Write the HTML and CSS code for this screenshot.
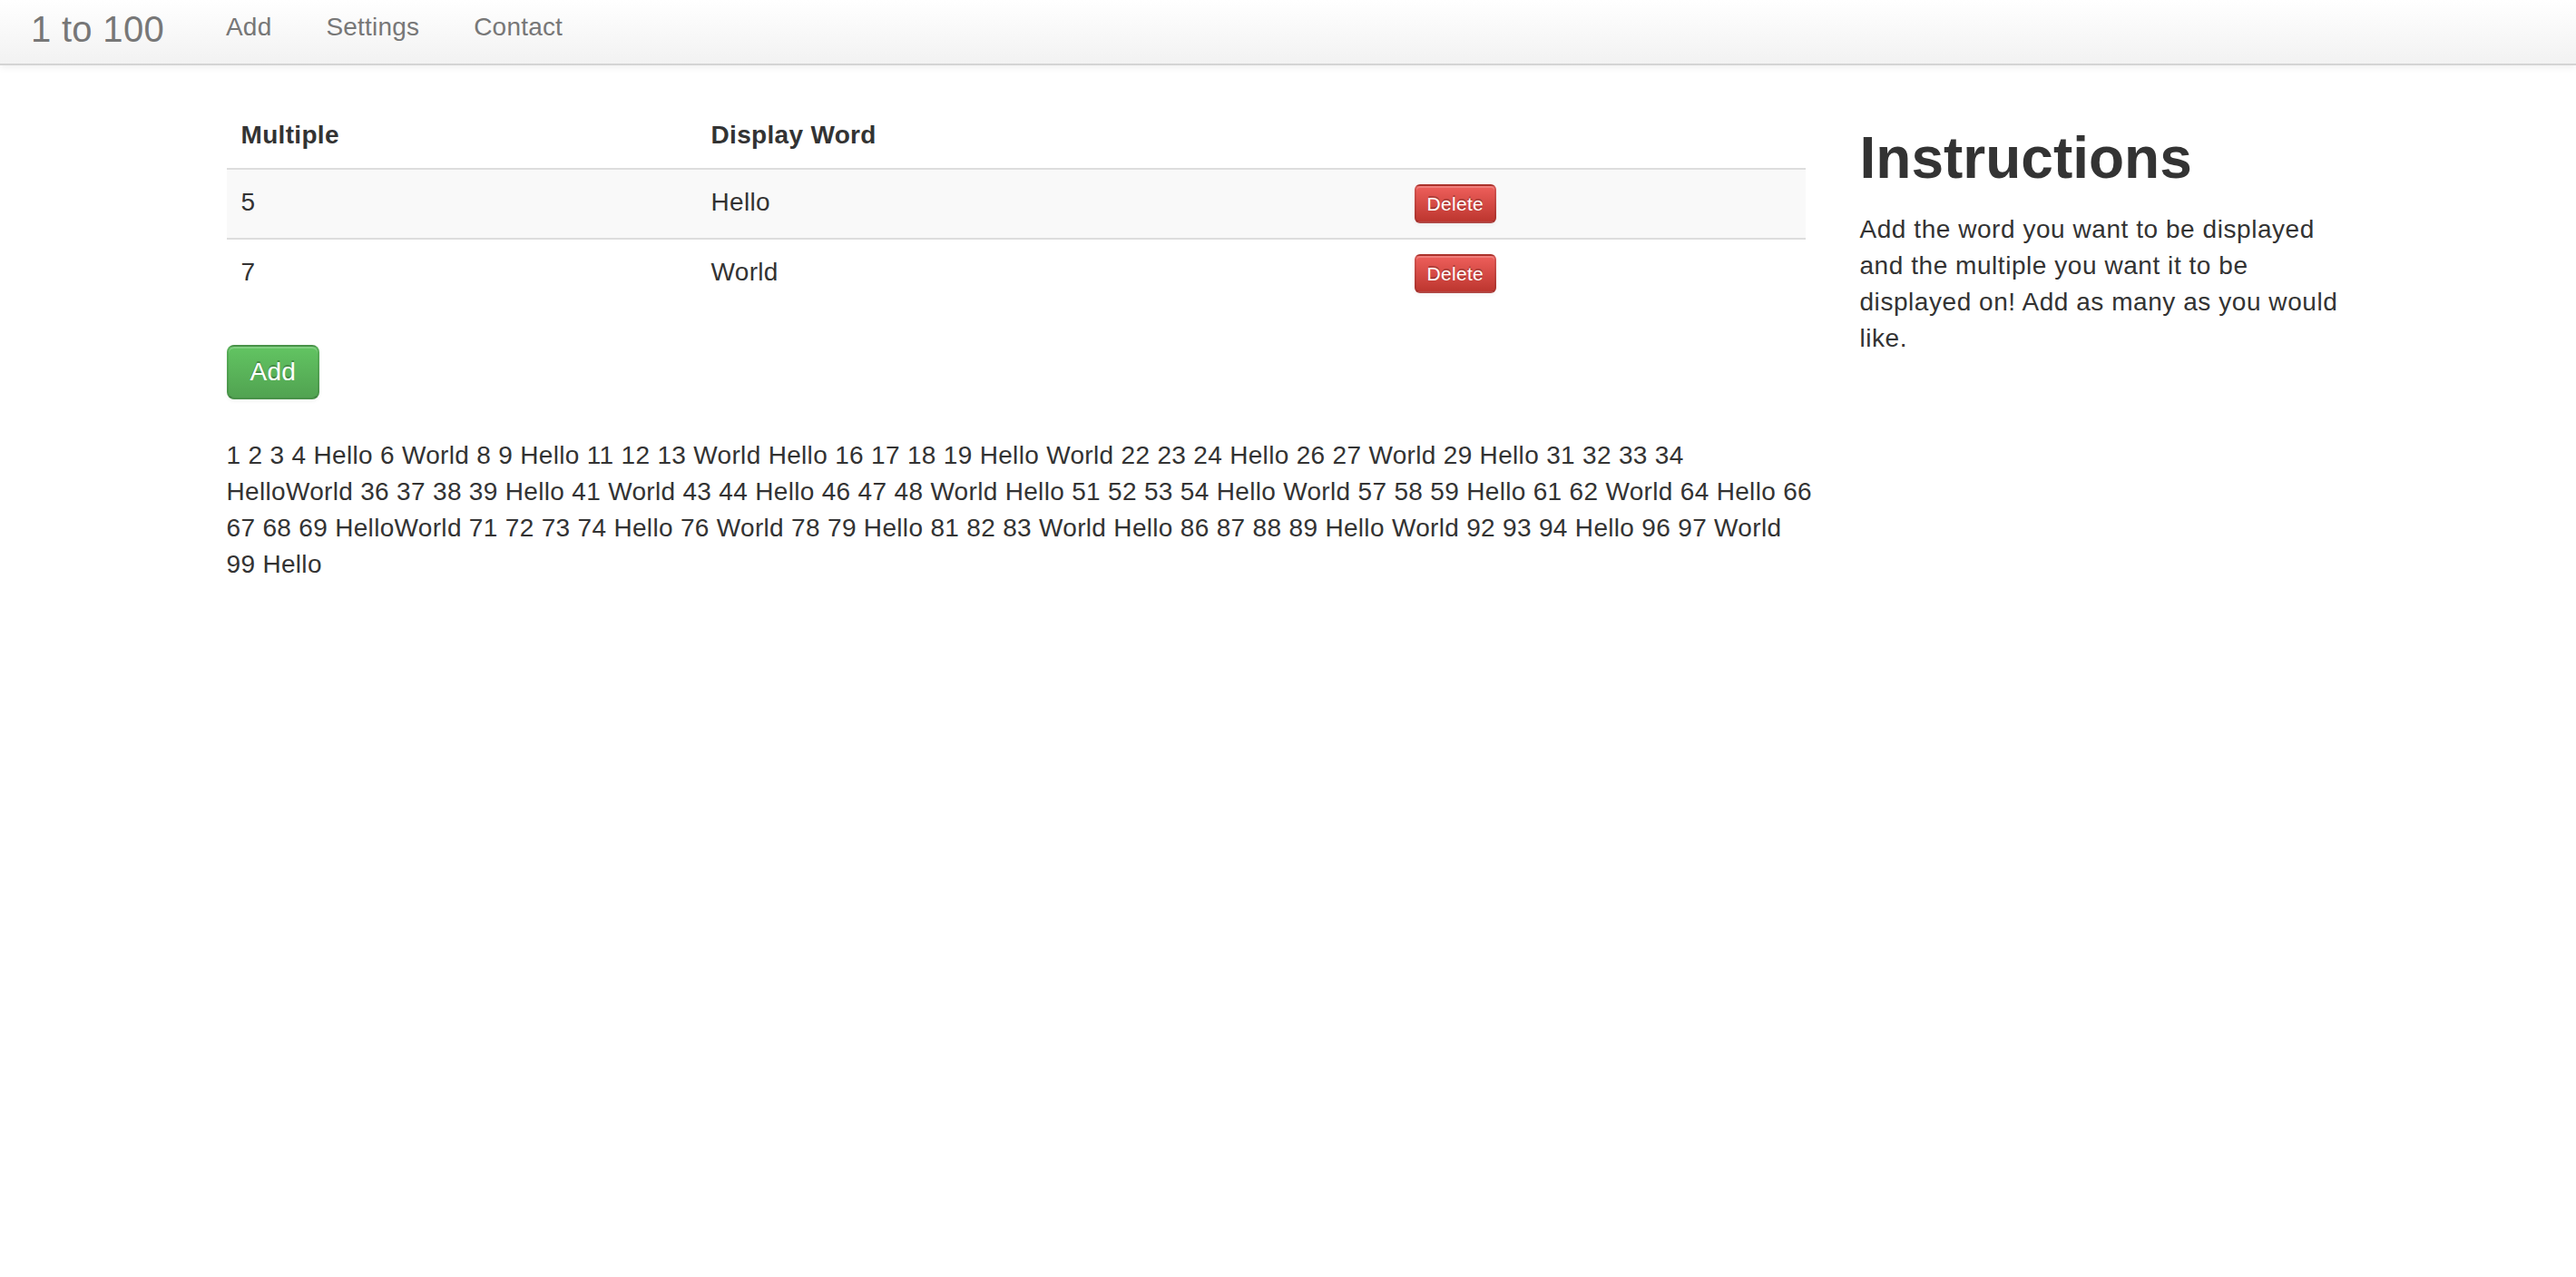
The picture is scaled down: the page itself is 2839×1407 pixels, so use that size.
FILE: index.html
```html
<!DOCTYPE html>
<html lang="en">
<head>
<meta charset="utf-8">
<title>1 to 100</title>
<link rel="stylesheet" href="styles.css">
</head>
<body>
<header class="navbar">
  <div class="navbar-inner">
    <a class="brand" href="#">1 to 100</a>
    <ul class="nav">
      <li><a href="#">Add</a></li>
      <li><a href="#">Settings</a></li>
      <li><a href="#">Contact</a></li>
    </ul>
  </div>
</header>
<div class="container">
  <div class="row">
    <div class="main">
      <table class="table">
        <thead>
          <tr>
            <th class="col-multiple">Multiple</th>
            <th class="col-word">Display Word</th>
            <th class="col-action"></th>
          </tr>
        </thead>
        <tbody>
          <tr class="odd">
            <td>5</td>
            <td>Hello</td>
            <td><button class="btn btn-mini btn-danger" type="button">Delete</button></td>
          </tr>
          <tr>
            <td>7</td>
            <td>World</td>
            <td><button class="btn btn-mini btn-danger" type="button">Delete</button></td>
          </tr>
        </tbody>
      </table>
      <div class="actions">
        <button class="btn btn-success" type="button">Add</button>
      </div>
      <p class="results">1 2 3 4 Hello 6 World 8 9 Hello 11 12 13 World Hello 16 17 18 19 Hello World 22 23 24 Hello 26 27 World 29 Hello 31 32 33 34<br>HelloWorld 36 37 38 39 Hello 41 World 43 44 Hello 46 47 48 World Hello 51 52 53 54 Hello World 57 58 59 Hello 61 62 World 64 Hello 66<br>67 68 69 HelloWorld 71 72 73 74 Hello 76 World 78 79 Hello 81 82 83 World Hello 86 87 88 89 Hello World 92 93 94 Hello 96 97 World<br>99 Hello</p>
    </div>
    <aside class="side">
      <h1 class="side-title">Instructions</h1>
      <p class="side-text">Add the word you want to be displayed and the multiple you want it to be displayed on! Add as many as you would like.</p>
    </aside>
  </div>
</div>
</body>
</html>
```
FILE: styles.css
```css
html, body {
  margin: 0;
  padding: 0;
}
body {
  font-family: "Liberation Sans", Arial, Helvetica, sans-serif;
  font-size: 28px;
  line-height: 40px;
  letter-spacing: 0.32px;
  color: #333333;
  background: #ffffff;
}
a {
  text-decoration: none;
}

/* navbar */
.navbar-inner {
  display: flex;
  align-items: flex-start;
  height: 70px;
  background-image: linear-gradient(to bottom, #ffffff, #f2f2f2);
  border-bottom: 2px solid #d4d4d4;
  box-shadow: 0 2px 8px rgba(0, 0, 0, 0.065);
}
.brand {
  display: block;
  padding: 0 38px 0 34px;
  font-size: 40px;
  line-height: 64px;
  letter-spacing: 0.3px;
  color: #777777;
}
.nav {
  display: flex;
  margin: 0;
  padding: 0;
  list-style: none;
}
.nav a {
  display: block;
  padding: 0 30px;
  font-size: 28px;
  line-height: 60px;
  letter-spacing: 0.2px;
  color: #777777;
}

/* layout */
.container {
  width: 2340px;
  margin: 0 auto;
  padding-top: 41px;
}
.row {
  display: flex;
  gap: 60px;
}
.main {
  width: 1740px;
  flex: none;
}
.side {
  width: 540px;
  flex: none;
}

/* table */
.table {
  width: 100%;
  border-collapse: collapse;
  border-spacing: 0;
  margin-bottom: 41px;
}
.table th,
.table td {
  padding: 16px;
  text-align: left;
  vertical-align: top;
  line-height: 40px;
}
.table th {
  font-weight: bold;
}
.table td {
  border-top: 2px solid #dddddd;
}
.table .odd td {
  background: #f9f9f9;
}
.col-multiple {
  width: 486px;
}
.col-word {
  width: 743px;
}

/* buttons */
.btn {
  display: inline-block;
  margin: 0;
  font-family: inherit;
  color: #ffffff;
  text-shadow: 0 -2px 0 rgba(0, 0, 0, 0.25);
  border: 2px solid;
  border-color: rgba(0, 0, 0, 0.1) rgba(0, 0, 0, 0.1) rgba(0, 0, 0, 0.25);
  box-shadow: inset 0 2px 0 rgba(255, 255, 255, 0.2), 0 2px 4px rgba(0, 0, 0, 0.05);
  cursor: pointer;
  vertical-align: top;
}
.btn-mini {
  padding: 0 12px;
  font-size: 21px;
  line-height: 39px;
  letter-spacing: 0.3px;
  border-radius: 6px;
}
.btn-danger {
  background-color: #da4f49;
  background-image: linear-gradient(to bottom, #ee5f5b, #bd362f);
}
.btn-success {
  padding: 8px 24px;
  font-size: 28px;
  line-height: 40px;
  letter-spacing: 0.3px;
  border-radius: 8px;
  background-color: #5bb75b;
  background-image: linear-gradient(to bottom, #62c462, #51a351);
}
.actions {
  height: 60px;
}
.results {
  margin: 42px 0 0;
  white-space: nowrap;
}

/* side */
.side-title {
  margin: 21px 0 19px;
  font-size: 64px;
  line-height: 80px;
  font-weight: bold;
  letter-spacing: 0;
  color: #333333;
}
.side-text {
  margin: 0;
  letter-spacing: 0.55px;
}
```
